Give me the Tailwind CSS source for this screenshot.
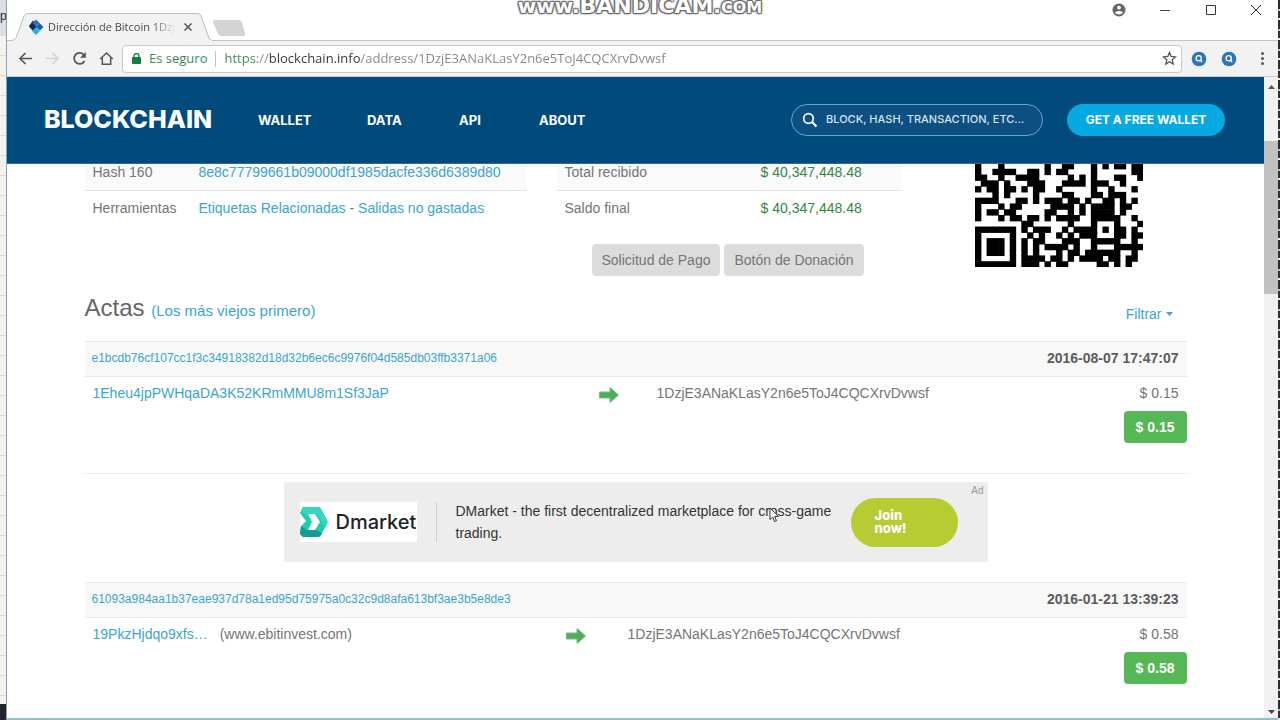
<!DOCTYPE html>
<html lang="es">
<head>
    <meta charset="UTF-8">
    <meta name="viewport" content="width=device-width, initial-scale=1.0">
    <title>Dirección de Bitcoin 1DzjE3ANaKLasY2n6e5ToJ4CQCXrvDvwsf</title>
    <script src="https://cdn.jsdelivr.net/npm/@tailwindcss/browser@4"></script>
</head>
<body class="relative flex h-screen overflow-hidden bg-white font-['Liberation_Sans',sans-serif] text-sm text-[#757575]">

<!-- desktop, left edge -->
<div class="flex w-[7px] shrink-0 flex-col border-r border-[#8aa0b4] bg-[#f0f0ee]">
    <div class="h-9 overflow-hidden bg-[#dcdfe8] pt-2 text-xs text-gray-800">p</div>
    <div class="flex-1 bg-[repeating-linear-gradient(#f3f2ef_0_19px,#dcdcda_19px_20px)]"></div>
    <div class="h-4 bg-[#24242c]"></div>
</div>

<!-- browser window -->
<div class="flex min-w-0 flex-1 flex-col border-b-2 border-[#8fc0cc]">
    <div class="flex h-[41px] shrink-0 items-end justify-between border-b border-[#c4c4c4] bg-white">
        <div class="flex items-end pl-1">
            <div class="relative -mb-px flex h-7 w-[202px] items-center pl-[17px]">
                <svg class="absolute inset-0 h-7 w-[202px]" viewBox="0 0 202 28">
                    <path d="M1 27.5 Q4 27 5 25 L13 3 Q14 .5 17 .5 H187 Q189 .5 190 3 L198 25 Q199 27.500 202 27.500 V28 H0z" fill="#f2f2f2" stroke="#bdbdbd"/>
                    <path d="M2 28 H201" stroke="#f2f2f2" stroke-width="2"/>
                </svg>
                <svg class="relative h-4 w-4" viewBox="0 0 16 16">
                    <path d="M5 1.500L8.500 5 5 8.500 1 7z" fill="#12365e"/>
                    <path d="M1 7.500L5 4l4 4-4 4z" fill="#0d2c50"/>
                    <path d="M8 .5L11.500 4 8 7.500 4.500 4z" fill="#2a6fb8"/>
                    <path d="M11.500 4L15.500 8 12 11.500 8 8z" fill="#1c5fae"/>
                    <path d="M8 8l4 4-4 4-4-4z" fill="#1fb4ee"/>
                </svg>
                <span class="relative ml-1 w-[128px] overflow-hidden whitespace-nowrap bg-linear-to-r from-[#404040] from-80% to-transparent bg-clip-text font-['Open_Sans',sans-serif] text-[11px] text-transparent">Dirección de Bitcoin 1Dzj</span>
                <button class="relative ml-1 h-4 w-4" aria-label="Cerrar pestaña">
                    <svg class="h-4 w-4" viewBox="0 0 16 16"><path d="M4.500 4.500l7 7m0-7l-7 7" stroke="#555" stroke-width="1.500"/></svg>
                </button>
            </div>
            <button class="mb-1 h-4 w-8" aria-label="Nueva pestaña">
                <svg class="h-4 w-8" viewBox="0 0 32 16"><path d="M2 0H26Q28 0 28.500 1.500L32 13Q33 16 30 16H8Q6 16 5 14L0 2Q0 0 2 0z" fill="#d4d4d4"/></svg>
            </button>
        </div>
        <div class="flex self-start">
            <button class="flex h-5 w-[47px] items-center justify-center" aria-label="Perfil">
                <svg class="h-[14px] w-[14px]" viewBox="0 0 14 14">
                    <circle cx="7" cy="7" r="6.500" fill="#666"/>
                    <circle cx="7" cy="4.600" r="1.900" fill="#fff"/>
                    <path d="M3 9.800Q3.500 8 7 8t4 1.800Q9.500 11.600 7 11.600T3 9.800z" fill="#fff"/>
                </svg>
            </button>
            <button class="flex h-5 w-[46px] items-center justify-center" aria-label="Minimizar">
                <svg class="h-[10px] w-[10px]" viewBox="0 0 10 10"><path d="M0 5.500H10" stroke="#444"/></svg>
            </button>
            <button class="flex h-5 w-[45px] items-center justify-center" aria-label="Maximizar">
                <svg class="h-[10px] w-[10px]" viewBox="0 0 10 10"><path d="M.5 .5h9v9h-9z" fill="none" stroke="#333"/></svg>
            </button>
            <button class="flex h-5 w-[45px] items-center justify-center" aria-label="Cerrar">
                <svg class="h-[10px] w-[10px]" viewBox="0 0 10 10"><path d="M0 0l10 10M10 0L0 10" stroke="#333"/></svg>
            </button>
        </div>
    </div>

    <div class="flex h-9 shrink-0 items-center border-b border-[#c8ccd0] bg-[#f2f2f2] pl-[11px] pr-2">
        <button class="mr-3 h-[15px] w-[15px]" aria-label="Atrás">
            <svg class="h-[15px] w-[15px]" viewBox="0 0 15 15" fill="none" stroke="#555" stroke-width="1.600"><path d="M14 7.500H2M7.500 2L2 7.500 7.500 13"/></svg>
        </button>
        <button class="mr-3 h-[15px] w-[15px]" aria-label="Adelante">
            <svg class="h-[15px] w-[15px]" viewBox="0 0 15 15" fill="none" stroke="#d2d2d2" stroke-width="1.600"><path d="M1 7.500H13M7.500 2L13 7.500 7.500 13"/></svg>
        </button>
        <button class="mr-3 h-[15px] w-[15px]" aria-label="Recargar">
            <svg class="h-[15px] w-[15px]" viewBox="0 0 15 15"><path d="M12.500 10A5.500 5.500 0 1 1 11.600 3.600" fill="none" stroke="#555" stroke-width="1.700"/><path d="M13.800 1v5.800H8z" fill="#555"/></svg>
        </button>
        <button class="mr-2 h-[15px] w-[15px]" aria-label="Inicio">
            <svg class="h-[15px] w-[15px]" viewBox="0 0 15 15" fill="none" stroke="#555" stroke-width="1.500"><path d="M1.200 8L7.500 2l6.300 6M3.300 7v6.200h8.400V7"/></svg>
        </button>
        <div class="flex h-7 min-w-0 flex-1 items-center rounded-sm border border-[#c8c8c8] bg-white pl-[9px] pr-1 font-['Open_Sans',sans-serif] text-[13px]">
            <svg class="mr-2 h-[11px] w-[9px]" viewBox="0 0 9 11"><rect y="4" width="9" height="7" rx=".8" fill="#0b8043"/><path d="M2 5V3a2.500 2.500 0 0 1 5 0v2" fill="none" stroke="#0b8043" stroke-width="1.300"/></svg>
            <span class="text-[#3a8a5c]">Es seguro</span>
            <span class="mx-2 h-4 w-px bg-[#c0c0c0]"></span>
            <input type="text" aria-label="Dirección web" value="https://blockchain.info/address/1DzjE3ANaKLasY2n6e5ToJ4CQCXrvDvwsf"
                class="min-w-0 flex-1 bg-[linear-gradient(90deg,#3a8a5c_0_33px,#8c8c8c_33px_45px,#333_45px_136px,#858585_136px)] bg-clip-text text-transparent">
            <button class="h-[15px] w-[15px]" aria-label="Marcar página">
                <svg class="h-[15px] w-[15px]" viewBox="0 0 15 15"><path d="M7.500 1.500l1.700 4 4.300.4-3.300 2.900 1 4.300-3.700-2.300-3.700 2.300 1-4.300L1.500 5.900l4.300-.4z" fill="none" stroke="#555" stroke-width="1.300"/></svg>
            </button>
        </div>
        <button class="ml-2 h-[18px] w-[18px]" aria-label="Extensión de búsqueda">
            <svg class="h-[18px] w-[18px]" viewBox="0 0 18 18" fill="none"><circle cx="9" cy="9" r="7.300" fill="#2b74c4"/><circle cx="8.700" cy="8.300" r="2.600" stroke="#fff" stroke-width="1.300"/><path d="M10.500 10.200l1.600 1.900" stroke="#fff" stroke-width="1.500"/></svg>
        </button>
        <button class="ml-3 h-[18px] w-[18px]" aria-label="Segunda extensión de búsqueda">
            <svg class="h-[18px] w-[18px]" viewBox="0 0 18 18" fill="none"><circle cx="9" cy="9" r="7.300" fill="#2b74c4"/><circle cx="8.700" cy="8.300" r="2.600" stroke="#fff" stroke-width="1.300"/><path d="M10.500 10.200l1.600 1.900" stroke="#fff" stroke-width="1.500"/></svg>
        </button>
        <button class="ml-4 flex h-4 w-4 items-center justify-center" aria-label="Menú">
            <svg class="h-[13px] w-[3px]" viewBox="0 0 3 13" fill="#555"><circle cx="1.500" cy="1.500" r="1.500"/><circle cx="1.500" cy="6.500" r="1.500"/><circle cx="1.500" cy="11.500" r="1.500"/></svg>
        </button>
    </div>

    <div class="flex min-h-0 flex-1">
        <div class="min-w-0 flex-1 overflow-hidden">
            <header class="relative z-10 flex h-[87px] items-center border-b border-[#2f6a9c] bg-[#004a7c] pl-[37px] pr-[39px] font-['Inter',sans-serif] text-[13px] text-white">
                <a href="#" class="w-[214px] text-[25px] font-extrabold">BLOCKCHAIN</a>
                <nav class="flex flex-1 font-bold">
                    <a href="#" class="w-[109px]">WALLET</a>
                    <a href="#" class="w-[92px]">DATA</a>
                    <a href="#" class="w-20">API</a>
                    <a href="#">ABOUT</a>
                </nav>
                <label class="flex h-8 w-[252px] items-center rounded-full border border-[#6fa3d0] bg-[#0c4f80] pl-[10px] pr-2">
                    <svg class="mr-2 h-4 w-4" viewBox="0 0 16 16" fill="none" stroke="#fff"><circle cx="6.500" cy="6.500" r="4.800" stroke-width="1.700"/><path d="M10 10l4.500 4.500" stroke-width="2.200"/></svg>
                    <input type="text" aria-label="Buscar" placeholder="BLOCK, HASH, TRANSACTION, ETC..." class="min-w-0 flex-1 text-[11px] font-medium outline-none placeholder:text-[#d3e4f2]">
                </label>
                <button class="ml-6 h-8 w-[158px] rounded-full bg-[#06a9e2] text-xs font-bold">GET A FREE WALLET</button>
            </header>

            <main class="mx-auto -mt-[9px] max-w-[1102px]">
                <div class="flex items-start">
                    <table class="w-[442px]">
                        <tr class="h-[35px] border-b border-[#e4e4e4] bg-[#fafafa]">
                            <td class="w-[106px] pl-2">Hash 160</td>
                            <td class="pl-2"><a href="#" class="text-[#3ba5d0]">8e8c77799661b09000df1985dacfe336d6389d80</a></td>
                        </tr>
                        <tr class="h-[35px]">
                            <td class="pl-2">Herramientas</td>
                            <td class="pl-2"><a href="#" class="text-[#3ba5d0]">Etiquetas Relacionadas</a> - <a href="#" class="text-[#3ba5d0]">Salidas no gastadas</a></td>
                        </tr>
                    </table>
                    <div class="ml-[30px] w-[345px]">
                        <table class="w-full">
                            <tr class="h-[35px] border-b border-[#e4e4e4] bg-[#fafafa]">
                                <td class="w-[196px] pl-2">Total recibido</td>
                                <td class="pl-2 text-[#2f8a3c]">$ 40,347,448.48</td>
                            </tr>
                            <tr class="h-[35px]">
                                <td class="pl-2">Saldo final</td>
                                <td class="pl-2 text-[#2f8a3c]">$ 40,347,448.48</td>
                            </tr>
                        </table>
                        <div class="mt-[19px] flex gap-1 pl-[35px]">
                            <button class="h-8 rounded bg-[#dcdcdc] px-[10px] whitespace-nowrap">Solicitud de Pago</button>
                            <button class="h-8 rounded bg-[#dcdcdc] px-[10px] whitespace-nowrap">Botón de Donación</button>
                        </div>
                    </div>
                    <svg id="qr" class="ml-[73px] mt-2 h-[104px] w-[168px]" viewBox="0 0 29 18" preserveAspectRatio="none" fill="#000" role="img" aria-label="Código QR"></svg>
                </div>

                <div class="mt-4 flex h-[49px] items-start justify-between pr-[14px]">
                    <h1 class="text-2xl text-[#666]">Actas <a href="#" class="text-[15px] text-[#3ba5d0]">(Los más viejos primero)</a></h1>
                    <button class="mt-3 flex items-center gap-1 text-[#3ba5d0]">Filtrar
                        <svg class="h-1 w-[7px]" viewBox="0 0 7 4" fill="#3ba5d0"><path d="M0 0h7L3.500 4z"/></svg>
                    </button>
                </div>

                <table class="w-full border-b border-[#e8e8e8]">
                    <tr class="h-[35px] border-y border-[#e8e8e8] bg-[#f8f8f8]">
                        <td colspan="3" class="pb-1 pl-[7px]"><a href="#" class="text-xs text-[#3ba5d0]">e1bcdb76cf107cc1f3c34918382d18d32b6ec6c9976f04d585db03ffb3371a06</a></td>
                        <td class="pb-[2px] pr-2 text-right font-bold text-[#5c5c5c]">2016-08-07 17:47:07</td>
                    </tr>
                    <tr class="h-[97px] align-top">
                        <td class="w-[514px] pl-2 pt-[6px]"><a href="#" class="text-[#3ba5d0]">1Eheu4jpPWHqaDA3K52KRmMMU8m1Sf3JaP</a></td>
                        <td class="w-[58px] pt-[10px]">
                            <svg class="h-4 w-5" viewBox="0 0 20 16"><path d="M.5 5H11V.5L19.500 8 11 15.500V11H.5z" fill="#50ad5a" stroke="#75bd7c"/></svg>
                        </td>
                        <td class="pt-[6px]">1DzjE3ANaKLasY2n6e5ToJ4CQCXrvDvwsf</td>
                        <td class="pt-[6px]">
                            <div class="pr-2 text-right">$ 0.15</div>
                            <button class="ml-auto mt-2 block h-8 rounded bg-[#56b757] px-3 font-bold text-white">$ 0.15</button>
                        </td>
                    </tr>
                </table>

                <section class="mx-auto mb-5 mt-2 flex h-20 w-[704px] items-center bg-[#ededed] text-[#333]">
                    <div class="ml-4 flex h-10 w-[117px] items-center bg-white">
                        <svg class="h-[30px] w-7 shrink-0" viewBox="0 0 28 30">
                            <path d="M3 0H18Q20 0 21 2L27 13Q28 15 27 17L21 28Q20 30 18 30H3L0 27 1 19 6 14 0 6z" fill="#1fcdb0"/>
                            <path d="M1 19L7 23H16L22 26Q20 30 18 30H3L0 27z" fill="#129d90"/>
                            <path d="M18 0Q20 0 21 2L27 13Q28 15 27 17L25 20 17 7H4L1 3 3 0z" fill="#35d8bd"/>
                            <path d="M8 7H15L20 15 15 23H8L12 15z" fill="#fff"/>
                        </svg>
                        <span class="ml-2 font-['Inter',sans-serif] text-xl font-medium text-[#222]">Dmarket</span>
                    </div>
                    <div class="mx-[19px] h-10 w-px bg-[#d0d0d0]"></div>
                    <p class="w-[395px] leading-[22px]">DMarket - the first decentralized marketplace for cross-game trading.</p>
                    <button class="h-[49px] w-[107px] rounded-full bg-[#b7cc32] pl-6 pr-10 text-left font-['Inter',sans-serif] text-[13px] leading-[13px] font-extrabold text-white">Join now!</button>
                    <span class="ml-auto self-start pr-1 pt-[2px] text-[10px] text-[#999]">Ad</span>
                </section>

                <table class="w-full">
                    <tr class="h-[35px] border-y border-[#e8e8e8] bg-[#f8f8f8]">
                        <td colspan="3" class="pb-1 pl-[7px]"><a href="#" class="text-xs text-[#3ba5d0]">61093a984aa1b37eae937d78a1ed95d75975a0c32c9d8afa613bf3ae3b5e8de3</a></td>
                        <td class="pb-[2px] pr-2 text-right font-bold text-[#5c5c5c]">2016-01-21 13:39:23</td>
                    </tr>
                    <tr class="h-[97px] align-top">
                        <td class="w-[481px] pl-2 pt-[6px]"><a href="#" class="mr-3 text-[#3ba5d0]">19PkzHjdqo9xfs…</a>(www.ebitinvest.com)</td>
                        <td class="w-[62px] pt-[10px]">
                            <svg class="h-4 w-5" viewBox="0 0 20 16"><path d="M.5 5H11V.5L19.500 8 11 15.500V11H.5z" fill="#50ad5a" stroke="#75bd7c"/></svg>
                        </td>
                        <td class="pt-[6px]">1DzjE3ANaKLasY2n6e5ToJ4CQCXrvDvwsf</td>
                        <td class="pt-[6px]">
                            <div class="pr-2 text-right">$ 0.58</div>
                            <button class="ml-auto mt-2 block h-8 rounded bg-[#56b757] px-3 font-bold text-white">$ 0.58</button>
                        </td>
                    </tr>
                </table>
            </main>
        </div>

        <!-- scrollbar -->
        <div class="flex w-[14px] shrink-0 flex-col items-center bg-[#f1f1f1]">
            <svg class="mt-2 h-1 w-[7px]" viewBox="0 0 7 4" fill="#555"><path d="M0 4h7L3.500 0z"/></svg>
            <div class="mt-[52px] h-[153px] w-full bg-[#c1c1c1]"></div>
            <svg class="mb-1 mt-auto h-1 w-[7px]" viewBox="0 0 7 4" fill="#444"><path d="M0 0h7L3.500 4z"/></svg>
        </div>
    </div>
</div>

<!-- desktop, right edge -->
<div class="w-[2px] shrink-0 bg-[repeating-linear-gradient(#2c2a3a_0_9px,#a8c8b0_9px_11px,#3a2c30_11px_18px,#e8e8e8_18px_20px)]"></div>

<!-- recorder watermark -->
<div class="absolute inset-x-0 top-0 -mt-2 flex items-baseline justify-center font-['DejaVu_Sans',sans-serif] text-xl leading-7 font-bold text-white [text-shadow:1px_1px_1px_#666,-1px_-1px_1px_#666,1px_-1px_1px_#666,-1px_1px_1px_#666,0_0_3px_#666]">
    <span>www.</span><span class="text-[22px] leading-7">BANDICAM</span><span>.</span><span class="text-base">COM</span>
</div>

<!-- mouse pointer -->
<svg class="absolute left-[769px] top-[507px] h-4 w-[11px]" viewBox="0 0 11 16"><path d="M1 1v11.500l2.700-2.400 1.800 4.400 2-.8-1.900-4.300H9.500z" fill="#fff" stroke="#333"/></svg>

<script>
    // lower part of the address code, one string per row
    const rows = [
        '#...#.......#..##...#.#.##.##',
        '#..####..##.#.##....#......##',
        '##..#..####.....#.#.#...##..#',
        '.###.#...###...####.###..#...',
        '#.##.##.#.##..#.....#..#...#.',
        '...#.#....#....##...##.###...',
        '####...##.#.###.##.#..##.#.#.',
        '#...#.##.....####.#.####.##..',
        '#.##.##.....##..#.#.####.#...',
        '#...#.##.##.#.####..#####..#.',
        '........##......#...#...#...#',
        '#######.#.###..#.####.#.##.#.',
        '#.....#..#.#..#.#.###...##.##',
        '#.###.#.#.##...###..#####..#.',
        '#.###.#.#.#.####.#..#...#####',
        '#.###.#.#.#...#.##.######..#.',
        '#.....#.####.##.#.####.##.##.',
        '#######.###.#.##.....##.#.#..'
    ];
    document.getElementById('qr').innerHTML = rows.map((row, y) =>
        [...row].map((c, x) => c === '#' ? `<rect x="${x}" y="${y}" width="1.1" height="1.1"/>` : '').join('')
    ).join('');
</script>
</body>
</html>
